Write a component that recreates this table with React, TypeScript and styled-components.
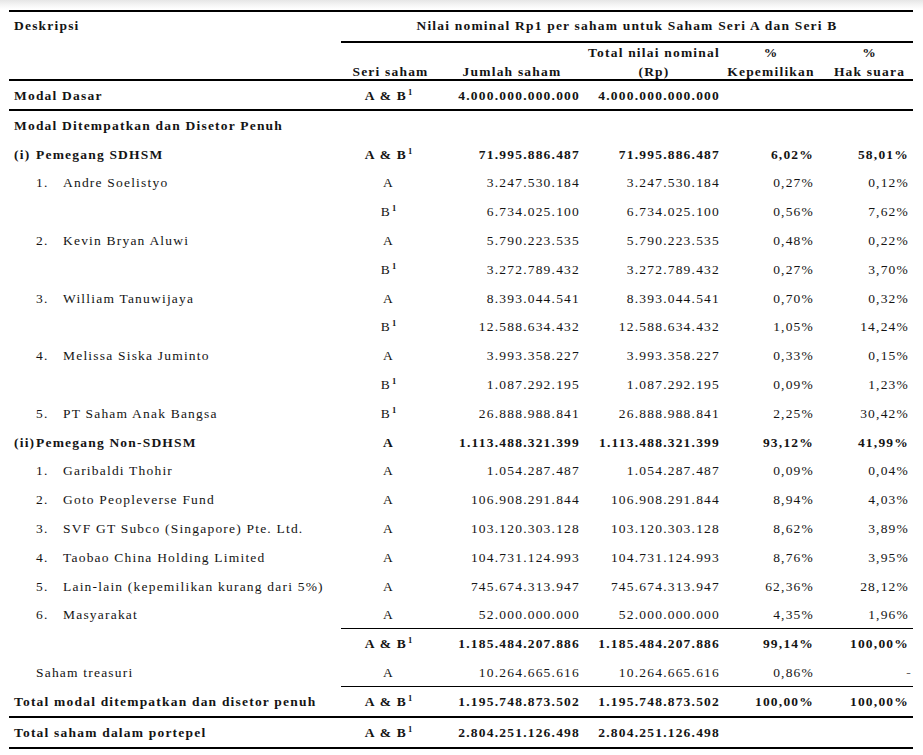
import styled, { createGlobalStyle } from 'styled-components';

const GlobalStyle = createGlobalStyle`
  html, body {
    margin: 0;
    padding: 0;
    background: #fff linear-gradient(to bottom, #e6e6e6 0px, #f5f5f5 5px, #ffffff 9px) no-repeat;
  }
  body {
    font-family: "Liberation Serif", "Times New Roman", serif;
    color: #141414;
  }
  * {
    box-sizing: border-box;
  }
`;

const COLUMNS = '332px 99px 144px 140px 94px 95px';

const Page = styled.div`
  padding: 10px 10px 0 9px;
`;

// tabel utama
const Sheet = styled.div`
  width: 904px;
  border-top: 2px solid #000;
  font-size: 13.5px;
  letter-spacing: 1.2px;
`;

type RuleKind = 'full' | 'thin' | 'none';

const GridRow = styled.div<{ $h: number; $bold?: boolean; $rule?: RuleKind }>`
  display: grid;
  grid-template-columns: ${COLUMNS};
  height: ${p => p.$h}px;
  font-weight: ${p => (p.$bold ? 700 : 400)};
  ${p => p.$rule === 'full' && 'border-bottom: 2px solid #000;'}
  ${p => p.$rule === 'thin' && '& > :not(:first-child) { border-bottom: 1px solid #000; }'}
`;

const Cell = styled.div<{ $align?: 'left' | 'center' | 'right' }>`
  display: flex;
  align-items: center;
  justify-content: ${p =>
    p.$align === 'left' ? 'flex-start' : p.$align === 'center' ? 'center' : 'flex-end'};
  padding-right: 4px;
  line-height: 15px;
  white-space: nowrap;
`;

const HeadCell = styled.div<{ $span?: boolean; $top?: boolean; $underline?: boolean; $shift?: number }>`
  display: flex;
  flex-direction: column;
  align-items: ${p => (p.$span === undefined && p.$top ? 'flex-start' : 'center')};
  justify-content: ${p => (p.$top ? 'flex-start' : 'flex-end')};
  padding-top: ${p => (p.$top ? 3.5 : 0)}px;
  padding-left: ${p => p.$shift ?? 0}px;
  font-weight: 700;
  line-height: 19px;
  text-align: center;
  white-space: nowrap;
  ${p => p.$span && 'grid-column: 2 / 7;'}
  ${p => p.$underline && 'border-bottom: 2px solid #000;'}
`;

const Label = styled.div<{ $indent: number }>`
  display: flex;
  padding-left: ${p => p.$indent}px;
`;

const Marker = styled.span<{ $w: number }>`
  flex: 0 0 ${p => p.$w}px;
`;

const Seri = styled.span`
  display: inline-block;
  line-height: 15px;
`;

const Sup = styled.sup`
  font-size: 8.5px;
  font-weight: 700;
  letter-spacing: 0;
  vertical-align: 5px;
  line-height: 0;
  margin-left: 1px;
`;

const Dash = styled.span`
  color: #666;
  margin-right: -3px;
`;

const Note = styled.p`
  margin: 3px 0 0 3px;
  font-size: 13.5px;
  color: #8a8a8a;
  letter-spacing: 1px;
`;

type Kind = 'section' | 'group' | 'item' | 'plain' | 'total';

type Item = {
  kind: Kind;
  mark?: string;
  label?: string;
  seri?: string;
  sup?: boolean;
  jumlah?: string;
  kep?: string;
  hak?: string;
  rule?: RuleKind;
  h?: number;
};

const rows: Item[] = [
  { kind: 'total', label: 'Modal Dasar', seri: 'A & B', sup: true, jumlah: '4.000.000.000.000', rule: 'full', h: 30 },
  { kind: 'section', label: 'Modal Ditempatkan dan Disetor Penuh' },
  { kind: 'group', mark: '(i)', label: 'Pemegang SDHSM', seri: 'A & B', sup: true, jumlah: '71.995.886.487', kep: '6,02%', hak: '58,01%' },
  { kind: 'item', mark: '1.', label: 'Andre Soelistyo', seri: 'A', jumlah: '3.247.530.184', kep: '0,27%', hak: '0,12%' },
  { kind: 'item', seri: 'B', sup: true, jumlah: '6.734.025.100', kep: '0,56%', hak: '7,62%' },
  { kind: 'item', mark: '2.', label: 'Kevin Bryan Aluwi', seri: 'A', jumlah: '5.790.223.535', kep: '0,48%', hak: '0,22%' },
  { kind: 'item', seri: 'B', sup: true, jumlah: '3.272.789.432', kep: '0,27%', hak: '3,70%' },
  { kind: 'item', mark: '3.', label: 'William Tanuwijaya', seri: 'A', jumlah: '8.393.044.541', kep: '0,70%', hak: '0,32%' },
  { kind: 'item', seri: 'B', sup: true, jumlah: '12.588.634.432', kep: '1,05%', hak: '14,24%' },
  { kind: 'item', mark: '4.', label: 'Melissa Siska Juminto', seri: 'A', jumlah: '3.993.358.227', kep: '0,33%', hak: '0,15%' },
  { kind: 'item', seri: 'B', sup: true, jumlah: '1.087.292.195', kep: '0,09%', hak: '1,23%' },
  { kind: 'item', mark: '5.', label: 'PT Saham Anak Bangsa', seri: 'B', sup: true, jumlah: '26.888.988.841', kep: '2,25%', hak: '30,42%' },
  { kind: 'group', mark: '(ii)', label: 'Pemegang Non-SDHSM', seri: 'A', jumlah: '1.113.488.321.399', kep: '93,12%', hak: '41,99%' },
  { kind: 'item', mark: '1.', label: 'Garibaldi Thohir', seri: 'A', jumlah: '1.054.287.487', kep: '0,09%', hak: '0,04%' },
  { kind: 'item', mark: '2.', label: 'Goto Peopleverse Fund', seri: 'A', jumlah: '106.908.291.844', kep: '8,94%', hak: '4,03%' },
  { kind: 'item', mark: '3.', label: 'SVF GT Subco (Singapore) Pte. Ltd.', seri: 'A', jumlah: '103.120.303.128', kep: '8,62%', hak: '3,89%' },
  { kind: 'item', mark: '4.', label: 'Taobao China Holding Limited', seri: 'A', jumlah: '104.731.124.993', kep: '8,76%', hak: '3,95%' },
  { kind: 'item', mark: '5.', label: 'Lain-lain (kepemilikan kurang dari 5%)', seri: 'A', jumlah: '745.674.313.947', kep: '62,36%', hak: '28,12%' },
  { kind: 'item', mark: '6.', label: 'Masyarakat', seri: 'A', jumlah: '52.000.000.000', kep: '4,35%', hak: '1,96%', rule: 'thin' },
  { kind: 'total', seri: 'A & B', sup: true, jumlah: '1.185.484.207.886', kep: '99,14%', hak: '100,00%' },
  { kind: 'plain', label: 'Saham treasuri', seri: 'A', jumlah: '10.264.665.616', kep: '0,86%', hak: '-', rule: 'thin', h: 29.3 },
  { kind: 'total', label: 'Total modal ditempatkan dan disetor penuh', seri: 'A & B', sup: true, jumlah: '1.195.748.873.502', kep: '100,00%', hak: '100,00%', rule: 'full', h: 30.5 },
  { kind: 'total', label: 'Total saham dalam portepel', seri: 'A & B', sup: true, jumlah: '2.804.251.126.498', rule: 'full', h: 31.5 },
];

const Description = ({ row }: { row: Item }) => {
  if (row.kind === 'group') {
    return (
      <Label $indent={5}>
        <Marker $w={22}>{row.mark}</Marker>
        <span>{row.label}</span>
      </Label>
    );
  }
  if (row.kind === 'item') {
    return (
      <Label $indent={27}>
        <Marker $w={27}>{row.mark}</Marker>
        <span>{row.label}</span>
      </Label>
    );
  }
  if (row.kind === 'plain') {
    return <Label $indent={27}>{row.label}</Label>;
  }
  return <Label $indent={5}>{row.label}</Label>;
};

const App = () => {
  return (
    <Page>
      <GlobalStyle />
      <Sheet>
        <GridRow $h={31}>
          <HeadCell $top>
            <Label $indent={5}>Deskripsi</Label>
          </HeadCell>
          <HeadCell $top $span $underline>
            Nilai nominal Rp1 per saham untuk Saham Seri A dan Seri B
          </HeadCell>
        </GridRow>
        <GridRow $h={38} $rule="full">
          <HeadCell />
          <HeadCell>Seri saham</HeadCell>
          <HeadCell>Jumlah saham</HeadCell>
          <HeadCell>
            <span>Total nilai nominal</span>
            <span>(Rp)</span>
          </HeadCell>
          <HeadCell>
            <span>%</span>
            <span>Kepemilikan</span>
          </HeadCell>
          <HeadCell $shift={8}>
            <span>%</span>
            <span>Hak suara</span>
          </HeadCell>
        </GridRow>
        {rows.map((row, i) => (
          <GridRow
            key={i}
            $h={row.h ?? 28.8}
            $bold={row.kind === 'total' || row.kind === 'section' || row.kind === 'group'}
            $rule={row.rule}
          >
            <Cell $align="left">
              <Description row={row} />
            </Cell>
            <Cell $align="center">
              <Seri>
                {row.seri}
                {row.sup && <Sup>1</Sup>}
              </Seri>
            </Cell>
            <Cell>{row.jumlah}</Cell>
            <Cell>{row.jumlah}</Cell>
            <Cell>{row.kep}</Cell>
            <Cell>{row.hak === '-' ? <Dash>-</Dash> : row.hak}</Cell>
          </GridRow>
        ))}
      </Sheet>
      <Note>Catatan:</Note>
    </Page>
  );
};

export default App;
